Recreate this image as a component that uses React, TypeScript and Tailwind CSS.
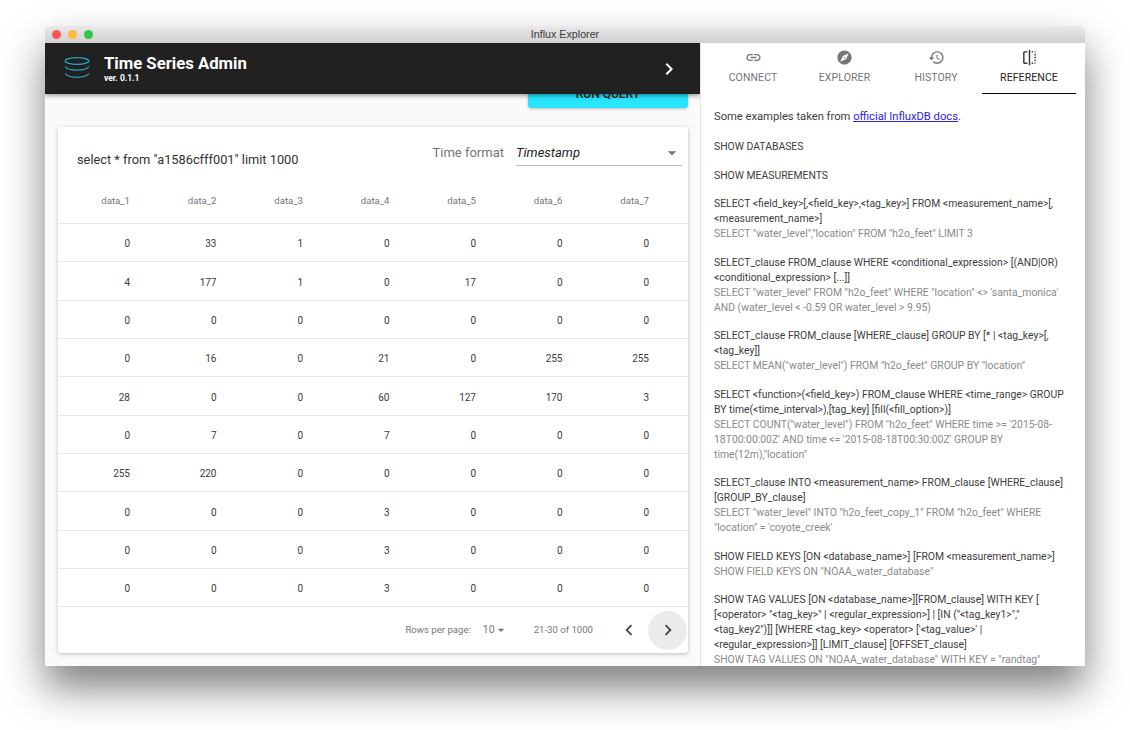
import React from "react";
import { MdLink, MdExplore, MdHistory, MdFlip, MdChevronRight, MdArrowDropDown, MdKeyboardArrowLeft, MdKeyboardArrowRight } from "react-icons/md";

const rows = [
  [0, 33, 1, 0, 0, 0, 0],
  [4, 177, 1, 0, 17, 0, 0],
  [0, 0, 0, 0, 0, 0, 0],
  [0, 16, 0, 21, 0, 255, 255],
  [28, 0, 0, 60, 127, 170, 3],
  [0, 7, 0, 7, 0, 0, 0],
  [255, 220, 0, 0, 0, 0, 0],
  [0, 0, 0, 3, 0, 0, 0],
  [0, 0, 0, 3, 0, 0, 0],
  [0, 0, 0, 3, 0, 0, 0],
];

const refs: { d: string[]; g: string[] }[] = [
  { d: ["SHOW DATABASES"], g: [] },
  { d: ["SHOW MEASUREMENTS"], g: [] },
  {
    d: ["SELECT <field_key>[,<field_key>,<tag_key>] FROM <measurement_name>[,", "<measurement_name>]"],
    g: ['SELECT "water_level","location" FROM "h2o_feet" LIMIT 3'],
  },
  {
    d: ["SELECT_clause FROM_clause WHERE <conditional_expression> [(AND|OR)", "<conditional_expression> [...]]"],
    g: ['SELECT "water_level" FROM "h2o_feet" WHERE "location" <> \'santa_monica\'', "AND (water_level < -0.59 OR water_level > 9.95)"],
  },
  {
    d: ["SELECT_clause FROM_clause [WHERE_clause] GROUP BY [* | <tag_key>[,", "<tag_key]]"],
    g: ['SELECT MEAN("water_level") FROM "h2o_feet" GROUP BY "location"'],
  },
  {
    d: ["SELECT <function>(<field_key>) FROM_clause WHERE <time_range> GROUP", "BY time(<time_interval>),[tag_key] [fill(<fill_option>)]"],
    g: ['SELECT COUNT("water_level") FROM "h2o_feet" WHERE time >= \'2015-08-', "18T00:00:00Z' AND time <= '2015-08-18T00:30:00Z' GROUP BY", 'time(12m),"location"'],
  },
  {
    d: ["SELECT_clause INTO <measurement_name> FROM_clause [WHERE_clause]", "[GROUP_BY_clause]"],
    g: ['SELECT "water_level" INTO "h2o_feet_copy_1" FROM "h2o_feet" WHERE', '"location" = \'coyote_creek\''],
  },
  {
    d: ["SHOW FIELD KEYS [ON <database_name>] [FROM <measurement_name>]"],
    g: ['SHOW FIELD KEYS ON "NOAA_water_database"'],
  },
  {
    d: [
      "SHOW TAG VALUES [ON <database_name>][FROM_clause] WITH KEY [",
      '[<operator> "<tag_key>" | <regular_expression>] | [IN ("<tag_key1>","',
      "<tag_key2\")]] [WHERE <tag_key> <operator> ['<tag_value>' |",
      "<regular_expression>]] [LIMIT_clause] [OFFSET_clause]",
    ],
    g: ['SHOW TAG VALUES ON "NOAA_water_database" WITH KEY = "randtag"'],
  },
];

const tabs = [
  { label: "CONNECT", Icon: MdLink, on: false },
  { label: "EXPLORER", Icon: MdExplore, on: false },
  { label: "HISTORY", Icon: MdHistory, on: false },
  { label: "REFERENCE", Icon: MdFlip, on: true },
];

function Logo() {
  return (
    <svg width="26" height="23" viewBox="0 0 26 23" fill="none" stroke="#2aa5bd" strokeWidth="1.3">
      <ellipse cx="13" cy="4" rx="11.800" ry="3.300" />
      <path d="M1.200 9.500c1.500 2.600 6.300 3.600 11.800 3.600s10.300-1 11.800-3.600" />
      <path d="M1.200 16.500c1.500 2.600 6.300 3.800 11.800 3.800s10.300-1.200 11.800-3.800" />
    </svg>
  );
}

export default function App() {
  return (
    <div className="w-[1130px] h-[730px] bg-white pt-[26px] pl-[45px] overflow-hidden font-['Roboto',sans-serif]">
      <div className="w-[1040px] h-[640px] flex flex-col rounded-t-[5px] shadow-[0_22px_40px_rgba(0,0,0,0.5)]">
        <div className="relative h-[17px] shrink-0 rounded-t-[5px] bg-gradient-to-b from-[#eaE8ea] to-[#d2d0d2] flex items-center justify-center">
          <div className="absolute left-[7px] top-[4px] flex gap-[7px]">
            <span className="w-[9px] h-[9px] rounded-full bg-[#fc5753]" />
            <span className="w-[9px] h-[9px] rounded-full bg-[#fdbc40]" />
            <span className="w-[9px] h-[9px] rounded-full bg-[#33c748]" />
          </div>
          <span className="text-[10.700px] text-[#3a3a3a] font-['Liberation_Sans',sans-serif]">Influx Explorer</span>
        </div>
        <div className="flex-1 min-h-0 flex">
          <div className="w-[656px] shrink-0 flex flex-col bg-[#fafafa] border-r border-[#e4e4e4] overflow-hidden">
            <div className="relative z-10 h-[51px] shrink-0 bg-[#212121] flex items-center pl-[19px] pr-[19px] shadow-[0_2px_4px_rgba(0,0,0,0.35)]">
              <Logo />
              <div className="ml-[14px] flex flex-col text-white">
                <span className="text-[16.700px] leading-[20px] font-bold">Time Series Admin</span>
                <span className="text-[8.500px] leading-[9px] font-bold">ver. 0.1.1</span>
              </div>
              <MdChevronRight className="ml-auto text-white" size={24} />
            </div>
            <div className="flex justify-end pr-[12px] -mt-[15px]">
              <div className="w-[160px] h-[29px] rounded-[3px] bg-[#28e4fd] flex items-center justify-center text-[12px] font-medium text-[#212121] shadow-[0_1px_3px_rgba(0,0,0,0.25)]">
                RUN QUERY
              </div>
            </div>
            <div className="ml-[13px] mt-[19px] w-[630px] h-[526px] rounded-[3px] bg-white shadow-[0_1px_4px_rgba(0,0,0,0.25)] flex flex-col">
              <div className="h-[54px] shrink-0 flex items-start pl-[19px] pr-[6px]">
                <span className="mt-[25px] text-[12.800px] leading-[16px] text-[#333]">select * from "a1586cfff001" limit 1000</span>
                <span className="ml-auto mt-[18px] text-[13px] leading-[16px] text-[#757575]">Time format</span>
                <div className="ml-[12px] mt-[13px] w-[166px] h-[26px] border-b border-[#bdbdbd] flex items-center justify-between">
                  <span className="italic text-[13px] text-[#222]">Timestamp</span>
                  <MdArrowDropDown size={20} className="text-[#757575]" />
                </div>
              </div>
              <div className="h-[43px] shrink-0 grid grid-cols-[72px_repeat(6,86.5px)] items-center border-b border-[#e6e6e6] text-[9.600px] text-[#757575] text-right">
                {[1, 2, 3, 4, 5, 6, 7].map((n) => (
                  <span key={n} className="-translate-y-[1px]">data_{n}</span>
                ))}
              </div>
              {rows.map((r, i) => (
                <div key={i} className="h-[38.350px] shrink-0 grid grid-cols-[72px_repeat(6,86.5px)] items-center border-b border-[#e6e6e6] text-[10px] text-[#3a3a3a] text-right">
                  {r.map((v, j) => (
                    <span key={j} className="translate-y-[0.5px]">{v}</span>
                  ))}
                </div>
              ))}
              <div className="flex-1 flex items-center justify-end pr-[1px] text-[9.600px] text-[#757575]">
                <span>Rows per page:</span>
                <span className="ml-[12px] text-[10.500px]">10</span>
                <MdArrowDropDown size={16} className="-ml-[2px]" />
                <span className="ml-[25px]">21-30 of 1000</span>
                <MdKeyboardArrowLeft size={22} className="ml-[25px] text-[#444]" />
                <div className="ml-[8px] w-[39px] h-[39px] rounded-full bg-[#ebebeb] flex items-center justify-center">
                  <MdKeyboardArrowRight size={22} className="text-[#444]" />
                </div>
              </div>
            </div>
          </div>
          <div className="flex-1 min-w-0 bg-white overflow-hidden flex flex-col">
            <div className="h-[51px] shrink-0 grid grid-cols-[92px_91px_92px_94px] pl-[6px]">
              {tabs.map(({ label, Icon, on }) => (
                <div key={label} className={`flex flex-col items-center pt-[6px] ${on ? "border-b border-black" : ""}`}>
                  <Icon size={17} className={on ? "text-[#333]" : "text-[#757575]"} />
                  <span className={`mt-[6px] text-[10.500px] leading-[12px] tracking-[0.1px] ${on ? "text-[#222]" : "text-[#757575]"}`}>{label}</span>
                </div>
              ))}
            </div>
            <div className="pl-[13px] pt-[15px] text-[10.400px] leading-[15px] text-[#3d3d3d] whitespace-nowrap">
              <div className="text-[11.200px] mb-[15px]">
                Some examples taken from <span className="text-[#2a1cee] underline">official InfluxDB docs</span>.
              </div>
              {refs.map((b, i) => (
                <div key={i} className="mb-[13.500px]">
                  {b.d.map((l) => (
                    <div key={l}>{l}</div>
                  ))}
                  {b.g.map((l) => (
                    <div key={l} className="text-[#8a8a8a]">{l}</div>
                  ))}
                </div>
              ))}
            </div>
          </div>
        </div>
      </div>
    </div>
  );
}
